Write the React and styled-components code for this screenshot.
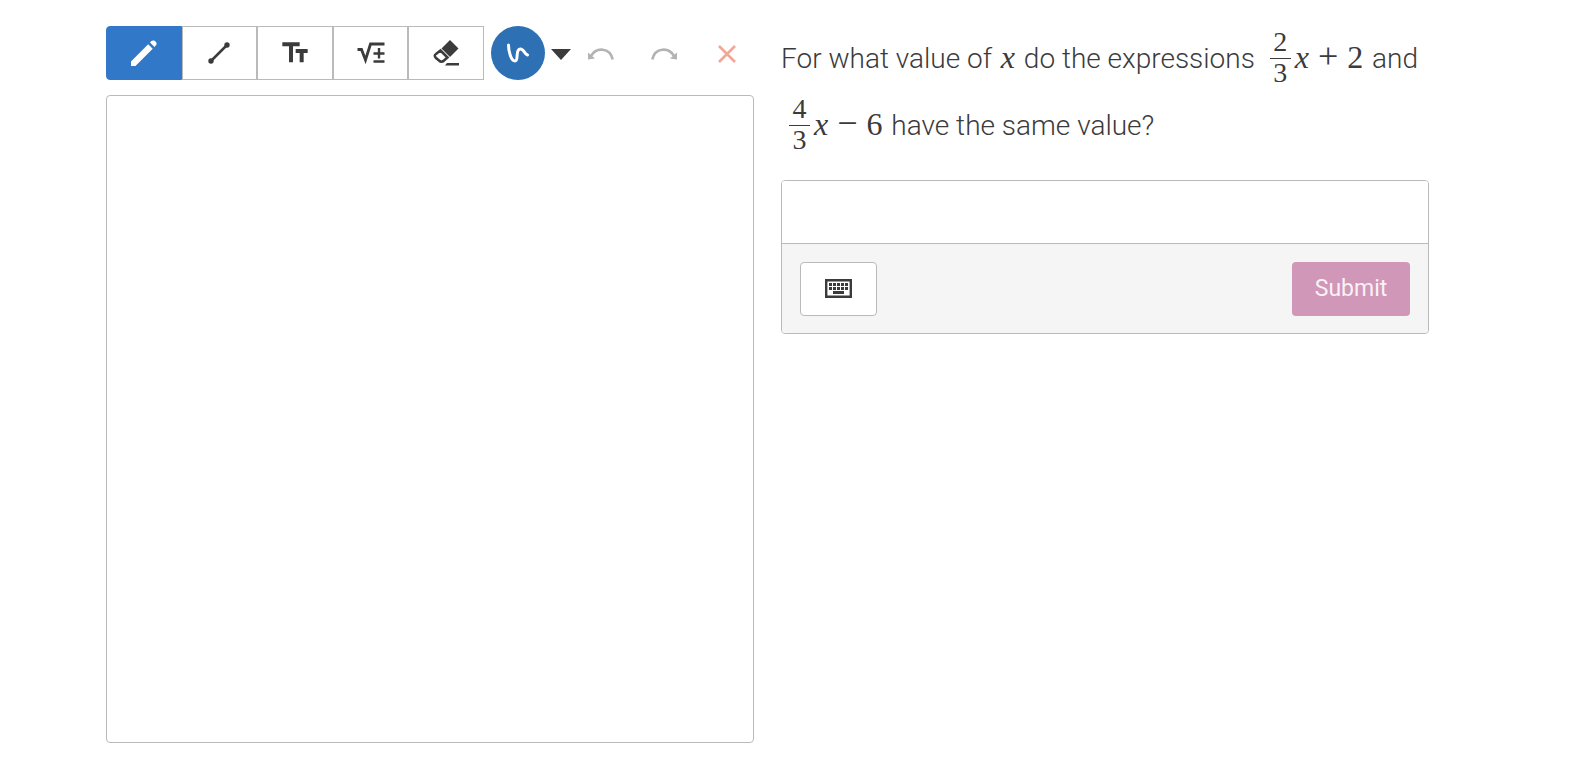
import React, { useState } from "react";
import styled, { createGlobalStyle } from "styled-components";
import { MdTextFields } from "react-icons/md";

const GlobalStyle = createGlobalStyle`
  * {
    box-sizing: border-box;
  }

  body {
    margin: 0;
    background: #fff;
    color: #3b3b3b;
    font-family: Roboto, "Liberation Sans", sans-serif;
  }

  button, input {
    font: inherit;
    color: inherit;
  }
`;

const Page = styled.main`
  display: grid;
  grid-template-columns: minmax(0, 1fr) minmax(0, 1fr);
  align-items: start;
  gap: 27px;
  padding: 26px 164px 22px 106px;
`;

const Toolbar = styled.div`
  display: flex;
  align-items: center;
  height: 54px;
  margin-bottom: 15px;
`;

const ToolGroup = styled.div`
  display: grid;
  grid-template-columns: repeat(5, 1fr);
  flex: none;
  width: 378px;
  height: 54px;
  margin-right: 7px;
`;

const ToolButton = styled.button`
  display: flex;
  align-items: center;
  justify-content: center;
  padding: 0;
  border: 1px solid ${({ $active }) => ($active ? "#3178c8" : "#bababa")};
  background: ${({ $active }) => ($active ? "#3178c8" : "#fff")};
  color: ${({ $active }) => ($active ? "#fff" : "#3b3b3b")};
  cursor: pointer;

  &:first-child {
    border-radius: 4px 0 0 4px;
  }
`;

const StrokeButton = styled.button`
  display: flex;
  align-items: center;
  justify-content: center;
  flex: none;
  width: 54px;
  height: 54px;
  padding: 0;
  border: 0;
  border-radius: 50%;
  background: #2d70b3;
  color: #fff;
  cursor: pointer;
`;

const IconButton = styled.button`
  display: flex;
  align-items: center;
  justify-content: center;
  flex: none;
  width: ${({ $narrow }) => ($narrow ? "32px" : "48px")};
  height: 54px;
  padding: 2px 0 0;
  border: 0;
  background: none;
  color: ${({ $color }) => $color || "#3b3b3b"};
  cursor: pointer;
`;

const History = styled.div`
  display: flex;
  gap: 15px;
`;

const Sketch = styled.div`
  aspect-ratio: 1;
  border: 1px solid #bababa;
  border-radius: 4px;
`;

const Question = styled.p`
  margin: -1px 0 21px;
  font-size: 28px;
  font-weight: 300;
  line-height: 67px;
`;

const MathText = styled.span`
  margin: 0 2px;
  font-family: "Liberation Serif", serif;
  font-size: 32px;
  font-weight: 400;
  line-height: 32px;
  white-space: nowrap;
`;

const Operator = styled.span`
  margin: 0 9px;
  font-size: 36px;
`;

const FractionBox = styled.span`
  display: inline-flex;
  flex-direction: column;
  align-items: center;
  width: 21px;
  margin: 0 4px 0 6px;
  font-size: 28px;
  line-height: 26px;
  vertical-align: 17px;
`;

const Numerator = styled.span`
  width: 100%;
  padding-bottom: 3px;
  border-bottom: 1px solid #3b3b3b;
  text-align: center;
`;

const Denominator = styled.span`
  padding-top: 1px;
`;

const AnswerCard = styled.form`
  border: 1px solid #bababa;
  border-radius: 4px;
  overflow: hidden;
`;

const AnswerInput = styled.input`
  display: block;
  width: 100%;
  height: 62px;
  padding: 0 18px;
  border: 0;
  outline: none;
  background: #fff;
  font-size: 28px;
`;

const AnswerFooter = styled.div`
  display: flex;
  justify-content: space-between;
  padding: 18px 18px 17px;
  border-top: 1px solid #bababa;
  background: #f5f5f5;
`;

const KeyboardButton = styled.button`
  display: flex;
  align-items: center;
  justify-content: center;
  width: 77px;
  height: 54px;
  padding: 0 0 1px;
  border: 1px solid #bababa;
  border-radius: 4px;
  background: #fff;
  cursor: pointer;
`;

const SubmitButton = styled.button`
  width: 118px;
  height: 54px;
  padding: 0 0 2px;
  border: 0;
  border-radius: 4px;
  background: #d097b8;
  color: #f9f1f6;
  font-size: 23px;
`;

const PencilIcon = () => (
  <svg width="28" height="28" viewBox="0 0 28 28" fill="currentColor">
    <path d="M1 27v-4.500L18.200 5.300l4.500 4.500L5.500 27zM20 3.500Q21.500 1 24 1.500Q27 3 26.500 5.500L24.500 8z" />
  </svg>
);

const LineIcon = () => (
  <svg width="24" height="24" viewBox="0 0 24 24" fill="currentColor">
    <path d="M4 20L20 4" stroke="currentColor" strokeWidth="2.500" />
    <circle cx="4" cy="20" r="2.700" />
    <circle cx="20" cy="4" r="2.700" />
  </svg>
);

const RootIcon = () => (
  <svg width="28" height="24" viewBox="0 0 28 24" fill="none" stroke="currentColor" strokeWidth="2.400">
    <path d="M0.500 8.500h4l4 10.500L13.500 3H27.500" strokeWidth="2.800" />
    <path d="M16.500 12.500h11M22 7v10.500M16.500 20.500h11" />
  </svg>
);

const EraserIcon = () => (
  <svg width="28" height="28" viewBox="0 0 28 28" fill="currentColor">
    <path d="M18 1L26.500 9.500 18 18 9.500 9.500z" />
    <path
      d="M8.500 11.500L15.500 18.500 12 21.500Q9.500 24 7 21.500L4 19Q1.500 16.500 4 15z"
      fill="none"
      stroke="currentColor"
      strokeWidth="2.500"
    />
    <path d="M13 26.500l2-2.500h12v2.500z" />
  </svg>
);

const SquiggleIcon = () => (
  <svg width="24" height="22" viewBox="0 0 24 22" fill="none">
    <path
      d="M2.500 3C2.500 9 5 19 9 19S9 7.500 14 7c4-0.500 4 5 7.500 6"
      stroke="currentColor"
      strokeWidth="3"
      strokeLinecap="round"
    />
  </svg>
);

const CaretIcon = () => (
  <svg width="20" height="11" viewBox="0 0 20 11">
    <path d="M0 0h20L10 11z" fill="currentColor" />
  </svg>
);

const UndoIcon = () => (
  <svg width="26" height="12" viewBox="0 0 26 12">
    <path d="M3 8C8 -1 22-1 24.700 11.500" fill="none" stroke="currentColor" strokeWidth="2.600" />
    <path d="M0 4.500v7l7-1z" fill="currentColor" />
  </svg>
);

const RedoIcon = () => (
  <svg width="26" height="12" viewBox="0 0 26 12">
    <path d="M23 8C18 -1 4-1 1.300 11.500" fill="none" stroke="currentColor" strokeWidth="2.600" />
    <path d="M26 4.500v7l-7-1z" fill="currentColor" />
  </svg>
);

const CloseIcon = () => (
  <svg width="18" height="18" viewBox="0 0 18 18">
    <path d="M1 1l16 16M17 1L1 17" stroke="currentColor" strokeWidth="2.600" />
  </svg>
);

const KeyboardIcon = () => (
  <svg width="27" height="19" viewBox="0 0 27 19" fill="currentColor">
    <path d="M1.200 1.200h24.600v16.600H1.200z" fill="none" stroke="currentColor" strokeWidth="2.400" />
    {[4, 8, 12, 16, 20].map((x) => (
      <path key={x} d={`M${x} 4h3v3h-3zM${x} 8h3v3h-3z`} />
    ))}
    <path d="M8 12h11v3H8z" />
  </svg>
);

const tools = [
  { id: "pencil", label: "Pencil", icon: <PencilIcon /> },
  { id: "line", label: "Line", icon: <LineIcon /> },
  { id: "text", label: "Text", icon: <MdTextFields size={32} /> },
  { id: "math", label: "Math", icon: <RootIcon /> },
  { id: "eraser", label: "Eraser", icon: <EraserIcon /> },
];

const Fraction = ({ top, bottom }) => (
  <FractionBox>
    <Numerator>{top}</Numerator>
    <Denominator>{bottom}</Denominator>
  </FractionBox>
);

const App = () => {
  const [tool, setTool] = useState("pencil");
  const [answer, setAnswer] = useState("");

  function handleSubmit(e) {
    e.preventDefault();
  }

  return (
    <>
      <GlobalStyle />
      <Page>
        <section>
          <Toolbar>
            <ToolGroup>
              {tools.map((item) => (
                <ToolButton
                  key={item.id}
                  type="button"
                  aria-label={item.label}
                  aria-pressed={tool === item.id}
                  $active={tool === item.id}
                  onClick={() => setTool(item.id)}
                >
                  {item.icon}
                </ToolButton>
              ))}
            </ToolGroup>
            <StrokeButton type="button" aria-label="Stroke">
              <SquiggleIcon />
            </StrokeButton>
            <IconButton type="button" aria-label="Stroke options" $narrow>
              <CaretIcon />
            </IconButton>
            <History>
              <IconButton type="button" aria-label="Undo" $color="#b3b3b3">
                <UndoIcon />
              </IconButton>
              <IconButton type="button" aria-label="Redo" $color="#b3b3b3">
                <RedoIcon />
              </IconButton>
              <IconButton type="button" aria-label="Clear" $color="#f3a694">
                <CloseIcon />
              </IconButton>
            </History>
          </Toolbar>
          <Sketch />
        </section>

        <section>
          <Question>
            For what value of{" "}
            <MathText>
              <i>x</i>
            </MathText>{" "}
            do the expressions{" "}
            <MathText>
              <Fraction top="2" bottom="3" />
              <i>x</i>
              <Operator>+</Operator>2
            </MathText>{" "}
            and{" "}
            <MathText>
              <Fraction top="4" bottom="3" />
              <i>x</i>
              <Operator>−</Operator>6
            </MathText>{" "}
            have the same value?
          </Question>
          <AnswerCard onSubmit={handleSubmit}>
            <AnswerInput
              aria-label="Answer"
              value={answer}
              onChange={(e) => setAnswer(e.target.value)}
            />
            <AnswerFooter>
              <KeyboardButton type="button" aria-label="Keyboard">
                <KeyboardIcon />
              </KeyboardButton>
              <SubmitButton type="submit">Submit</SubmitButton>
            </AnswerFooter>
          </AnswerCard>
        </section>
      </Page>
    </>
  );
};

export default App;
